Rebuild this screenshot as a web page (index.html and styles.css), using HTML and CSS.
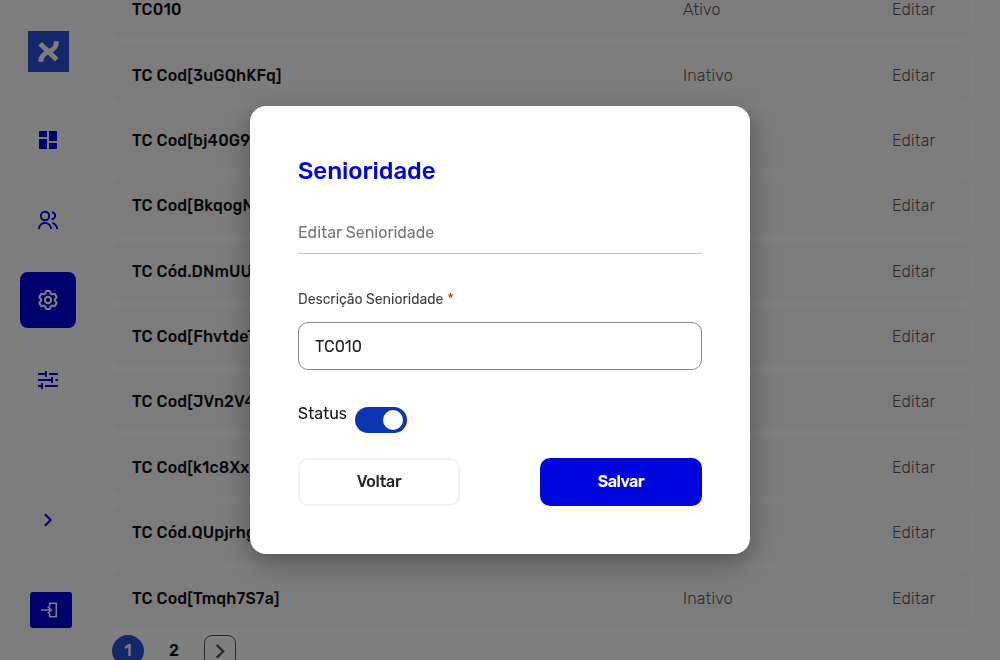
FILE: index.html
```html
<!DOCTYPE html>
<html lang="pt-BR">
<head>
<meta charset="utf-8">
<title>Senioridade</title>
<link rel="stylesheet" href="styles.css">
</head>
<body>
<div class="app">
  <aside class="sidebar">
    <svg class="logo" viewBox="0 0 41 41"><path d="M12.200 12.700 28.800 28.800" stroke-width="5"/><path d="M28.300 10.300V11.500c0 5-2.500 7-7.500 9s-8 4.500-8 10.200" stroke-width="5"/></svg>
    <nav class="nav">
      <a class="nav-item"><svg class="icon" viewBox="0 0 24 24"><path class="solid" d="M3 3h8v6H3zM3 11h8v10H3zM13 3h8v10h-8zM13 15h8v6h-8z"/></svg></a>
      <a class="nav-item"><svg class="icon" viewBox="0 0 24 24"><circle cx="9" cy="8" r="4.200"/><path d="M2.900 21a6.100 6.100 0 0 1 12.200 0M16 4.300a3.400 3.400 0 0 1 2.400 5.600q-1.100 1.300-2.900 1.400M16.300 14.800c2.600.8 4.500 3 4.800 6.200"/></svg></a>
      <a class="nav-item active"><svg class="icon" viewBox="0 0 24 24"><path d="M9.594 3.940c.09-.542.56-.94 1.110-.94h2.593c.55 0 1.020.398 1.110.94l.213 1.281c.063.374.313.686.645.87.074.04.147.083.22.127.325.196.72.257 1.075.124l1.217-.456a1.125 1.125 0 0 1 1.370.49l1.296 2.247a1.125 1.125 0 0 1-.26 1.431l-1.003.827c-.293.241-.438.613-.43.992a7.723 7.723 0 0 1 0 .255c-.008.378.137.75.43.991l1.004.827c.424.35.534.955.26 1.430l-1.298 2.247a1.125 1.125 0 0 1-1.369.491l-1.217-.456c-.355-.133-.75-.072-1.076.124a6.470 6.470 0 0 1-.22.128c-.331.183-.581.495-.644.869l-.213 1.281c-.09.543-.56.94-1.110.94h-2.594c-.55 0-1.019-.398-1.110-.94l-.213-1.281c-.062-.374-.312-.686-.644-.87a6.520 6.520 0 0 1-.22-.127c-.325-.196-.72-.257-1.076-.124l-1.217.456a1.125 1.125 0 0 1-1.369-.49l-1.297-2.247a1.125 1.125 0 0 1 .26-1.431l1.004-.827c.292-.24.437-.613.43-.991a6.932 6.932 0 0 1 0-.255c.007-.38-.138-.751-.43-.992l-1.004-.827a1.125 1.125 0 0 1-.26-1.430l1.297-2.247a1.125 1.125 0 0 1 1.370-.491l1.216.456c.356.133.751.072 1.076-.124.072-.044.146-.086.22-.128.332-.183.582-.495.644-.869z"/><circle cx="12" cy="12" r="3.100"/></svg></a>
      <a class="nav-item"><svg class="icon" viewBox="0 0 24 24"><path d="M2 6h8.500M10 3v6M13 6h9M2 12h14M16 9v6M19.500 12H22M2 18h4M6 15v6M9 18h13"/></svg></a>
    </nav>
    <svg class="icon expand" viewBox="0 0 24 24"><path d="m8.900 6.200 5.800 5.800-5.800 5.800"/></svg>
    <a class="logout"><svg class="icon" viewBox="0 0 24 24"><path d="M2 12h10M8.800 8.600l3.400 3.400-3.400 3.400M10.700 8.500V5.300h6.600v13.400h-6.600v-3.200"/></svg></a>
  </aside>
  <main class="content">
    <div class="list">
      <div class="row"><b class="name">TC010</b><span class="state">Ativo</span><span class="edit">Editar</span></div>
      <div class="row"><b class="name">TC Cod[3uGQhKFq]</b><span class="state">Inativo</span><span class="edit">Editar</span></div>
      <div class="row"><b class="name">TC Cod[bj40G9Wd]</b><span class="state">Inativo</span><span class="edit">Editar</span></div>
      <div class="row"><b class="name">TC Cod[BkqogNtA]</b><span class="state">Inativo</span><span class="edit">Editar</span></div>
      <div class="row"><b class="name">TC Cód.DNmUUrpe</b><span class="state">Inativo</span><span class="edit">Editar</span></div>
      <div class="row"><b class="name">TC Cod[FhvtdeTs]</b><span class="state">Inativo</span><span class="edit">Editar</span></div>
      <div class="row"><b class="name">TC Cod[JVn2V4mR]</b><span class="state">Inativo</span><span class="edit">Editar</span></div>
      <div class="row"><b class="name">TC Cod[k1c8XxLb]</b><span class="state">Inativo</span><span class="edit">Editar</span></div>
      <div class="row"><b class="name">TC Cód.QUpjrhgs</b><span class="state">Inativo</span><span class="edit">Editar</span></div>
      <div class="row"><b class="name">TC Cod[Tmqh7S7a]</b><span class="state">Inativo</span><span class="edit">Editar</span></div>
    </div>
    <div class="pager">
      <span class="page current">1</span><span class="page">2</span>
      <span class="next"><svg class="icon" viewBox="0 0 24 24"><path d="m8.700 6 6.500 6.300-6.500 6.300"/></svg></span>
    </div>
  </main>
</div>
<div class="overlay">
  <form class="modal">
    <h2 class="title">Senioridade</h2>
    <p class="subtitle"><span>Editar Senioridade</span></p>
    <label class="label"><span>Descrição Senioridade</span><i class="required">*</i></label>
    <div class="field"><span>TC010</span></div>
    <div class="status"><span class="status-text">Status</span><span class="switch"></span></div>
    <div class="actions"><button type="button" class="btn back">Voltar</button><button type="button" class="btn save">Salvar</button></div>
  </form>
</div>
</body>
</html>
```
FILE: styles.css
```css
* { box-sizing: border-box; }
body { margin: 0; height: 660px; overflow: hidden; background: #fff; font: 16px/24px Rubik, Roboto, sans-serif; color: #111; }
.app { display: flex; height: 660px; overflow: hidden; }
.icon { width: 24px; height: 24px; fill: none; stroke: currentColor; stroke-width: 1.9; display: block; }
.icon .solid { fill: currentColor; stroke: none; }

.sidebar { width: 96px; flex: none; display: flex; flex-direction: column; align-items: center; padding-top: 31px; background: #fafafa; color: #0000d8; }
.logo { width: 41px; height: 41px; margin-left: 1px; background: #2850d2; fill: none; stroke: #fafafa; }
.nav { display: flex; flex-direction: column; gap: 24px; margin-top: 40px; }
.nav-item { width: 56px; height: 56px; display: grid; place-items: center; border-radius: 8px; }
.nav-item.active { background: #0000d8; color: #fafafa; }
.nav-item.active .icon { stroke-width: 2.1; }
.expand { margin-top: 100px; stroke-width: 2.1; }
.logout { width: 42px; height: 36px; margin: 60px 0 0 6px; display: grid; place-items: center; border-radius: 3px; background: #0000d8; color: #fafafa; }
.logout .icon { stroke-width: 1.6; }

.content { flex: 1; padding: 0 31px 0 16px; }
.list { display: flex; flex-direction: column; gap: 8px; margin-top: -19.4px; }
.row { height: 57.4px; flex: none; display: grid; grid-template-columns: 551px 209px 1fr; align-items: center; padding: 1.7px 20px 0; border-radius: 8px; background: #f9f9f9; }
.name { font-weight: 500; letter-spacing: .15px; }
.state, .edit { font-weight: 300; letter-spacing: .2px; color: #555; }
.pager { display: flex; align-items: center; margin-top: 8.400px; font-weight: 500; }
.page { width: 32px; height: 32px; margin-right: 14px; display: grid; place-items: center; border-radius: 50%; }
.page.current { background: #2850d2; color: #fff; }
.next { width: 32px; height: 32px; display: grid; place-items: center; border: 1px solid #555; border-radius: 8px; }
.next .icon { stroke: #555; stroke-width: 2.4; }

.overlay { position: fixed; inset: 0; display: grid; place-items: center; background: rgba(0, 0, 0, .5); }
.modal { width: 500px; height: 448px; padding: 48px; border-radius: 16px; background: #fff; box-shadow: 0 8px 28px rgba(0,0,0,.35); }
.title { margin: 0; height: 34px; font-size: 24px; line-height: 34px; font-weight: 500; letter-spacing: -.05px; color: #0006dc; }
.subtitle { margin: 24px 0 0; height: 42px; line-height: 42px; border-bottom: 1px solid #c6c6c6; color: #757575; }
.label { display: flex; align-items: flex-start; gap: 4px; margin-top: 35px; height: 33px; font-size: 14px; line-height: 22px; color: #3c3c3c; }
.required { font-style: normal; color: #c62828; }
.field { height: 48px; padding: 0 16px; line-height: 47px; border: 1px solid #8c8c8c; border-radius: 10px; color: #222; }
.status { display: flex; gap: 8px; margin-top: 32px; height: 56px; }
.status-text { width: 49px; }
.switch { width: 52px; height: 26px; margin-top: 5px; padding: 3px; display: flex; justify-content: flex-end; border-radius: 13px; background: #0d35b1; }
.switch::after { content: ""; width: 20px; height: 20px; margin-right: 1px; border-radius: 50%; background: #fafafa; }
.actions { display: flex; justify-content: space-between; }
.btn { width: 162px; height: 48px; border-radius: 10px; font: 500 16px/24px Rubik, Roboto, sans-serif; letter-spacing: -.3px; }
.back { border: 2px solid #f1f1f1; background: #fff; color: #212529; }
.save { border: 0; background: #0006dc; color: #fff; font-weight: 600; letter-spacing: -.5px; }
```
